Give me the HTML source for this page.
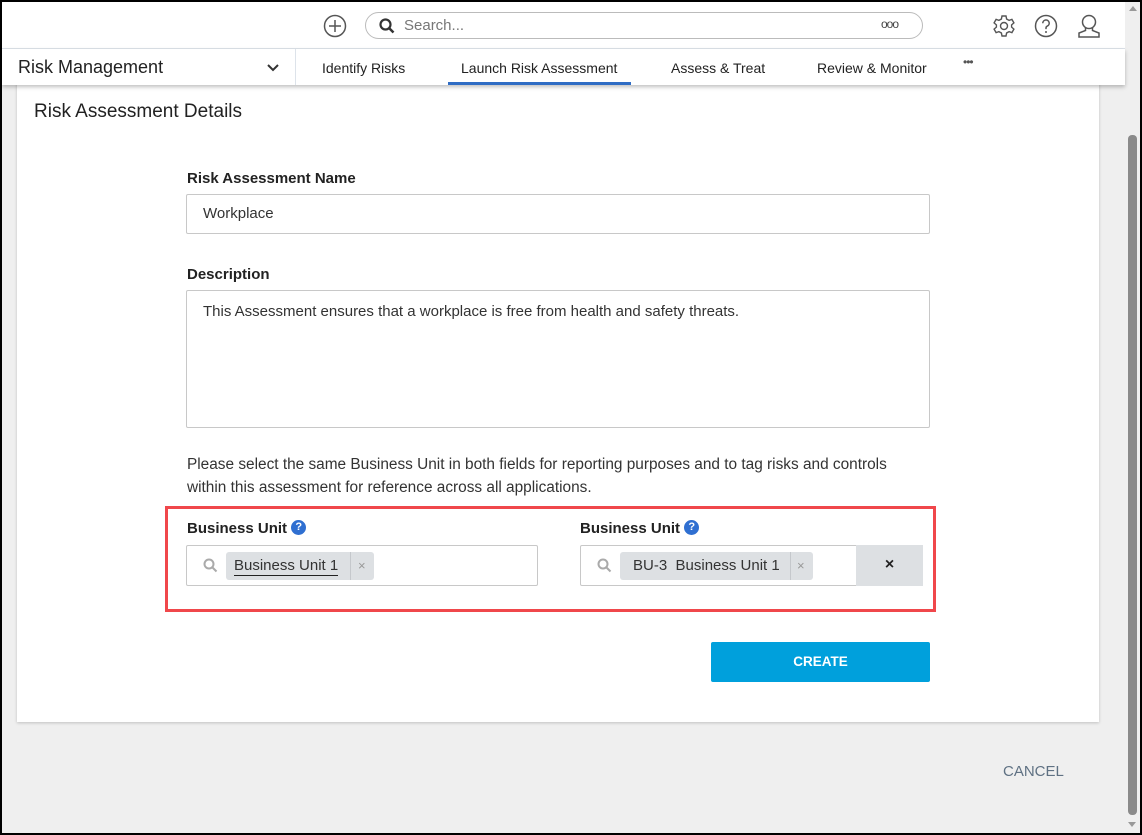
<!DOCTYPE html>
<html><head><meta charset="utf-8"><style>
*{box-sizing:border-box;margin:0;padding:0}
body{width:1142px;height:835px;overflow:hidden;background:#000;font-family:"Liberation Sans",sans-serif;color:#222;position:relative}
#vp{position:absolute;left:2px;top:2px;width:1138px;height:831px;background:#efefef;overflow:hidden}
#top{position:absolute;left:0;top:0;width:1123px;height:47px;background:#fff;border-bottom:1px solid #dde3ea}
#nav{position:absolute;left:0;top:47px;width:1123px;height:36px;background:#fff;box-shadow:0 2px 4px rgba(0,0,0,.25);z-index:2}
.abs{position:absolute}
#sb{position:absolute;left:1123px;top:0;width:15px;height:831px;background:#efefef}
.card{position:absolute;left:15px;top:80px;width:1082px;height:640px;background:#fff;box-shadow:0 1px 3px rgba(0,0,0,.2)}
.lbl{position:absolute;font-weight:bold;font-size:15px;color:#222}
.inp{position:absolute;border:1px solid #c8c8c8;background:#fff;border-radius:2px;font-size:15px;color:#333}
.q{display:inline-block;width:15px;height:15px;border-radius:50%;background:#2f6fd1;color:#fff;font-size:11px;font-weight:bold;text-align:center;line-height:15px;vertical-align:top}
.tag{position:absolute;top:6px;height:28px;background:#dde0e3;border-radius:3px;font-size:15px;line-height:28px;color:#333}
</style></head><body><div id="vp">
<div id="top">
 <svg class="abs" style="left:321px;top:12px" width="24" height="24" viewBox="0 0 24 24"><circle cx="12" cy="12" r="10.5" fill="none" stroke="#555" stroke-width="1.5"/><path d="M12 6v12M6 12h12" stroke="#555" stroke-width="1.5"/></svg>
 <div class="abs" style="left:363px;top:10px;width:558px;height:27px;border:1px solid #bbb;border-radius:14px"></div>
 <svg class="abs" style="left:377px;top:16px" width="16" height="16" viewBox="0 0 16 16"><circle cx="6.5" cy="6.5" r="5" fill="none" stroke="#333" stroke-width="2.2"/><path d="M10 10l4.5 4.5" stroke="#333" stroke-width="2.5"/></svg>
 <div class="abs" style="left:402px;top:15px;font-size:15px;color:#777">Search...</div>
 <div class="abs" style="left:879px;top:15px;font-size:12px;color:#444;letter-spacing:-1px">ooo</div>
 <svg class="abs" style="left:990px;top:12px" width="24" height="24" viewBox="0 0 24 24"><circle cx="12" cy="12" r="3.5" fill="none" stroke="#555" stroke-width="1.4"/><path d="M10 2h4l.6 3 2.5 1.4 2.8-1 2 3.5-2.3 2v2.2l2.3 2-2 3.5-2.8-1-2.5 1.4-.6 3h-4l-.6-3-2.5-1.4-2.8 1-2-3.5 2.3-2v-2.2l-2.3-2 2-3.5 2.8 1 2.5-1.4z" fill="none" stroke="#555" stroke-width="1.4"/></svg>
 <svg class="abs" style="left:1032px;top:12px" width="24" height="24" viewBox="0 0 24 24"><circle cx="12" cy="12" r="10.5" fill="none" stroke="#555" stroke-width="1.5"/><path d="M8.8 9.2a3.2 3.2 0 1 1 4.5 2.9c-.9.4-1.3 1-1.3 2v1" fill="none" stroke="#555" stroke-width="1.5"/><circle cx="12" cy="18" r="1" fill="#555"/></svg>
 <svg class="abs" style="left:1074px;top:11px" width="26" height="26" viewBox="0 0 26 26"><circle cx="13" cy="9" r="6.5" fill="none" stroke="#555" stroke-width="1.5"/><path d="M9.5 14.5v3L3 20v4h20v-4l-6.5-2.5v-3" fill="none" stroke="#555" stroke-width="1.5"/></svg>
</div>
<div id="nav">
 <div class="abs" style="left:16px;top:8px;font-size:18px;color:#222">Risk Management</div>
 <svg class="abs" style="left:265px;top:15px" width="12" height="8" viewBox="0 0 12 8"><path d="M1 1l5 5 5-5" fill="none" stroke="#333" stroke-width="2"/></svg>
 <div class="abs" style="left:293px;top:0;width:1px;height:36px;background:#dde3ea"></div>
 <div class="abs" style="left:320px;top:11px;font-size:14px">Identify Risks</div>
 <div class="abs" style="left:459px;top:11px;font-size:14px">Launch Risk Assessment</div>
 <div class="abs" style="left:446px;top:33px;width:183px;height:3px;background:#2f6cc4"></div>
 <div class="abs" style="left:669px;top:11px;font-size:14px">Assess &amp; Treat</div>
 <div class="abs" style="left:815px;top:11px;font-size:14px">Review &amp; Monitor</div>
 <div class="abs" style="left:961px;top:6px;font-size:12px;color:#555;letter-spacing:-1px">•••</div>
</div>
<div class="card">
 <div class="abs" style="left:17px;top:19px;font-size:19px;color:#222">Risk Assessment Details</div>
 <div class="lbl" style="left:170px;top:88px">Risk Assessment Name</div>
 <div class="inp" style="left:169px;top:112px;width:744px;height:40px;padding:10px 16px">Workplace</div>
 <div class="lbl" style="left:170px;top:184px">Description</div>
 <div class="inp" style="left:169px;top:208px;width:744px;height:138px;padding:12px 16px">This Assessment ensures that a workplace is free from health and safety threats.</div>
 <div class="abs" style="left:170px;top:371px;font-size:15.4px;line-height:23px;color:#333;width:722px">Please select the same Business Unit in both fields for reporting purposes and to tag risks and controls within this assessment for reference across all applications.</div>
 <div class="lbl" style="left:170px;top:438px">Business Unit <span class="q">?</span></div>
 <div class="inp" style="left:169px;top:463px;width:352px;height:41px">
  <svg class="abs" style="left:16px;top:12px" width="15" height="15" viewBox="0 0 15 15"><circle cx="6" cy="6" r="4.5" fill="none" stroke="#aaa" stroke-width="2"/><path d="M9.5 9.5l4 4" stroke="#aaa" stroke-width="2"/></svg>
  <div class="tag" style="left:39px;width:148px"><span style="margin-left:8px;border-bottom:1px solid #222;padding-bottom:1px">Business Unit 1</span><span class="abs" style="left:124px;top:0;width:1px;height:28px;background:#c5c8cc"></span><span class="abs" style="left:132px;color:#999;font-size:13px">×</span></div>
 </div>
 <div class="lbl" style="left:563px;top:438px">Business Unit <span class="q">?</span></div>
 <div class="inp" style="left:563px;top:463px;width:343px;height:41px">
  <svg class="abs" style="left:16px;top:12px" width="15" height="15" viewBox="0 0 15 15"><circle cx="6" cy="6" r="4.5" fill="none" stroke="#aaa" stroke-width="2"/><path d="M9.5 9.5l4 4" stroke="#aaa" stroke-width="2"/></svg>
  <div class="tag" style="left:39px;width:193px"><span style="margin-left:13px">BU-3&nbsp; Business Unit 1</span><span class="abs" style="left:170px;top:0;width:1px;height:28px;background:#c5c8cc"></span><span class="abs" style="left:177px;color:#999;font-size:13px">×</span></div>
  <div class="abs" style="left:275px;top:-1px;width:67px;height:41px;background:#dde0e3;text-align:center;line-height:40px;font-weight:bold;font-size:16px;color:#222">×</div>
 </div>
 <div class="abs" style="left:148px;top:424px;width:771px;height:106px;border:3px solid #f0474b"></div>
 <div class="abs" style="left:694px;top:560px;width:219px;height:40px;background:#00a0dc;border-radius:2px;color:#fff;font-weight:bold;font-size:13.5px;text-align:center;line-height:40px">CREATE</div>
</div>
<div class="abs" style="left:1001px;top:761px;font-size:15px;color:#5f7183">CANCEL</div>
<div id="sb"><div class="abs" style="left:4px;top:4px;width:0;height:0;border-left:4px solid transparent;border-right:4px solid transparent;border-bottom:5px solid #999"></div><div class="abs" style="left:3px;top:133px;width:9px;height:680px;background:#8a8a8a;border-radius:4px"></div><div class="abs" style="left:3px;top:820px;width:0;height:0;border-left:4px solid transparent;border-right:4px solid transparent;border-top:5px solid #999"></div></div>
</div></body></html>
